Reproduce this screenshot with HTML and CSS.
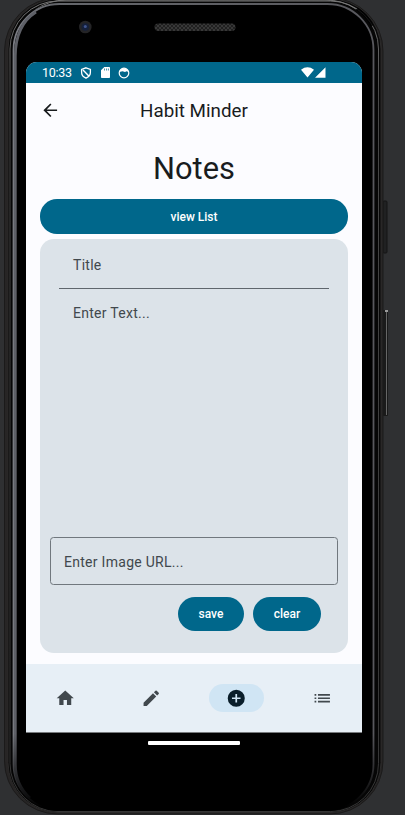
FILE: index.html
```
<!DOCTYPE html>
<html lang="en">
<head>
<meta charset="utf-8">
<title>Habit Minder</title>
<link rel="stylesheet" href="styles.css">
</head>
<body>
<svg class="device" viewBox="0 0 405 815" aria-hidden="true">
  <defs>
    <linearGradient id="rim" x1="0" x2="1" y1="0" y2="0">
      <stop offset="0" stop-color="#7b7d84"/><stop offset=".1" stop-color="#65676c"/><stop offset="1" stop-color="#58585d"/>
    </linearGradient>
    <linearGradient id="edge" x1="0" x2="0" y1="0" y2="1">
      <stop offset="0" stop-color="#777"/><stop offset=".12" stop-color="#484848"/><stop offset="1" stop-color="#353535"/>
    </linearGradient>
    <linearGradient id="fade" x1="0" x2="0" y1="0" y2="1">
      <stop offset="0" stop-color="#fff"/><stop offset=".9" stop-color="#fff"/><stop offset=".99" stop-color="#000"/>
    </linearGradient>
    <mask id="rimMask"><rect width="405" height="815" fill="url(#fade)"/></mask>
    <pattern id="mesh" width="4" height="4" patternUnits="userSpaceOnUse">
      <rect width="4" height="4" fill="#202020"/><path d="M0 0l4 4M4 0L0 4" stroke="#3e3e3e" stroke-width=".8"/>
    </pattern>
  </defs>
  <rect x="383" y="201" width="4" height="52" rx="1" fill="#202122" stroke="#151515"/>
  <rect x="383" y="310" width="5" height="106" rx="1" fill="#1a1a1a"/>
  <path d="M386.500 310v105" stroke="#666"/><path d="M385 311h3" stroke="#999" stroke-width="2"/>
  <rect x="4.500" y="-2" width="378.500" height="816" rx="53" fill="#272525" stroke="#1b1a1a"/>
  <rect x="8" y="-1" width="373" height="813.500" rx="50" fill="#080808" stroke="#2c2b2b" stroke-width="1"/>
  <rect x="10" y="1" width="368.500" height="810.500" rx="48" fill="#060606" stroke="url(#edge)" stroke-width="1"/>
  <path d="M35 10Q49 0 66 0H326Q342 0 356 9" fill="none" stroke="#777" stroke-width="1"/>
  <rect x="12" y="3" width="362" height="808" rx="47" fill="#000"/>
  <g fill="none" mask="url(#rimMask)">
    <rect x="13.500" y="4" width="360" height="806" rx="46" stroke="url(#rim)" stroke-width="1.800"/>
    <path d="M30 798Q15.300 785 15.300 764V56Q15.500 25 36 12" stroke="#5e6067" stroke-width="2.800"/>
  </g>
  <path d="M357 9Q366 14 372 26" fill="none" stroke="#000" stroke-width="3" opacity=".8"/>
  <circle cx="85.300" cy="27" r="6.300" fill="#242426"/><circle cx="85.300" cy="27" r="3.700" fill="#15203b"/><circle cx="85.300" cy="26.500" r="1.500" fill="#40548c"/>
  <rect x="154.500" y="23.500" width="81" height="7.500" rx="3.700" fill="url(#mesh)"/>
</svg>
<main class="screen">
  <div class="status">
    <span class="time">10:33</span>
    <svg class="s-shield" viewBox="0 0 12 12"><path d="M6 .8L10.400 2.400V5.500Q10.400 9.200 6 11.200Q1.600 9.200 1.600 5.500V2.400Z" fill="none" stroke="#fff" stroke-width="1.300"/><path d="M3 3L8.800 9" fill="none" stroke="#fff" stroke-width="1.400"/></svg>
    <svg class="s-card" viewBox="0 0 9 11"><path d="M3.300 0H8.200Q9 0 9 .8V10.200Q9 11 8.200 11H.8Q0 11 0 10.200V3.300Z" fill="#fff"/><path d="M3.500 1.500v2M5.500 1.500v2M7.400 1.500v2" stroke="#00678b" stroke-width=".7"/></svg>
    <svg class="s-face" viewBox="0 0 12 12"><circle cx="6" cy="6" r="4.800" fill="none" stroke="#fff" stroke-width="1.200"/><path d="M1.300 5Q2.500 1.300 6 1.300T10.700 5L8.500 4.300 7 5 4.500 4.300Z" fill="#fff"/></svg>
    <svg class="s-signal" viewBox="0 0 25 11"><path d="M0 2.700Q6.500-2 13 2.700L6.500 10.500ZM24.500 .2V10.700H14Z" fill="#fff"/></svg>
  </div>
  <header class="appbar">
    <svg class="icon back" viewBox="0 0 24 24"><path d="M20 11H7.830l5.590-5.590L12 4l-8 8 8 8 1.410-1.410L7.830 13H20z"/></svg>
    <span class="app-title">Habit Minder</span>
  </header>
  <section class="content">
    <h1>Notes</h1>
    <button class="btn wide">view List</button>
    <div class="card">
      <div class="field title">Title</div>
      <div class="field text">Enter Text...</div>
      <div class="field url">Enter Image URL...</div>
      <div class="actions"><button class="btn save">save</button><button class="btn clear">clear</button></div>
    </div>
  </section>
  <nav class="nav">
    <span class="tab"><svg class="icon" viewBox="0 0 24 24"><path d="M10 20v-6h4v6h5v-8h3L12 3 2 12h3v8z"/></svg></span>
    <span class="tab"><svg class="icon" viewBox="0 0 24 24"><path d="M3 17.250V21h3.750L17.810 9.940l-3.750-3.750L3 17.250zM20.710 7.040a1 1 0 0 0 0-1.410l-2.340-2.340a1 1 0 0 0-1.410 0l-1.830 1.830 3.750 3.750 1.830-1.830z"/></svg></span>
    <span class="tab active"><svg class="icon" viewBox="0 0 24 24"><path d="M12 2a10 10 0 1 0 0 20 10 10 0 0 0 0-20zm5 11h-4v4h-2v-4H7v-2h4V7h2v4h4v2z"/></svg></span>
    <span class="tab"><svg class="icon" viewBox="0 0 24 24"><path d="M3 13h2v-2H3v2zm0 4h2v-2H3v2zm0-8h2V7H3v2zm4 4h14v-2H7v2zm0 4h14v-2H7v2zM7 7v2h14V7H7z"/></svg></span>
  </nav>
</main>
<div class="gesture"></div>
</body>
</html>
```
FILE: styles.css
```
* { box-sizing: border-box; }
body {
  margin: 0;
  width: 405px;
  height: 815px;
  overflow: hidden;
  background: #2f3032;
  font-family: Roboto, sans-serif;
  color: #191c1e;
  padding: 62px 43px 0 26px;
  position: relative;
}
.device { position: absolute; left: 0; top: 0; width: 405px; height: 815px; }
.screen {
  position: relative;
  display: flex;
  flex-direction: column;
  width: 336px;
  height: 670.5px;
  background: #fcfcff;
  border-radius: 11px 11px 0 0;
  overflow: hidden;
}
.status {
  height: 20.5px;
  flex: none;
  background: #00678b;
  color: #fff;
  display: flex;
  align-items: center;
  padding: 1px 36px 0 16px;
}
.time { font-size: 12.5px; width: 38px; letter-spacing: -.3px; }
.s-shield { width: 12px; height: 12px; }
.s-card { width: 9px; height: 11px; margin-left: 9px; }
.s-face { width: 12px; height: 12px; margin-left: 8px; }
.s-signal { width: 25px; height: 11px; margin-left: auto; }
.icon { width: 20.5px; height: 20.5px; fill: #41484d; display: block; }
.appbar {
  height: 55px;
  flex: none;
  display: grid;
  grid-template-columns: 48px 1fr 48px;
  align-items: center;
}
.back { fill: #191c1e; margin-left: 14px; }
.app-title { font-size: 18.8px; line-height: 24px; text-align: center; padding-top: 1px; }
.content { flex: 1; padding: 11px 14px 0; display: flex; flex-direction: column; }
h1 { margin: 0; font-weight: 400; font-size: 30.8px; line-height: 40px; text-align: center; }
.btn {
  border: 0;
  padding: 0;
  height: 34px;
  border-radius: 17px;
  background: #00678b;
  color: #fff;
  font: 500 12px/35.5px Roboto, sans-serif;
  letter-spacing: 0;
}
.wide { margin: 10.5px 0 5px; height: 34.5px; flex: none; padding-top: 1px; }
.card {
  height: 414px;
  background: #dce3e9;
  border-radius: 14px;
  padding: 8px 10px 22px;
  display: flex;
  flex-direction: column;
}
.field { font-size: 14px; line-height: 18px; letter-spacing: .28px; color: #41484d; }
.title { margin: 0 9px; padding: 9px 14px 0; height: 42px; border-bottom: 1px solid #5f666d; }
.text { flex: 1; padding: 15px 23px; }
.url { height: 48px; border: 1px solid #71787e; border-radius: 3.5px; padding: 15px 13px; }
.actions { display: flex; justify-content: flex-end; gap: 9px; margin-top: 12px; padding-right: 17px; }
.save { width: 66px; }
.clear { width: 68px; }
.nav {
  height: 68.5px;
  flex: none;
  background: #e7eff6;
  border-bottom: 1px solid #777a7d;
  display: grid;
  grid-template-columns: repeat(4, 79px);
  gap: 6.5px;
  align-items: center;
}
.tab { width: 55px; height: 28px; border-radius: 14px; margin: 0 auto; display: grid; place-items: center; }
.active { background: #d0e5f4; }
.active .icon { fill: #0a1e2a; }
.gesture { position: relative; margin: 8.5px 0 0 122px; width: 92px; height: 3.5px; border-radius: 1px; background: #fff; }
```
